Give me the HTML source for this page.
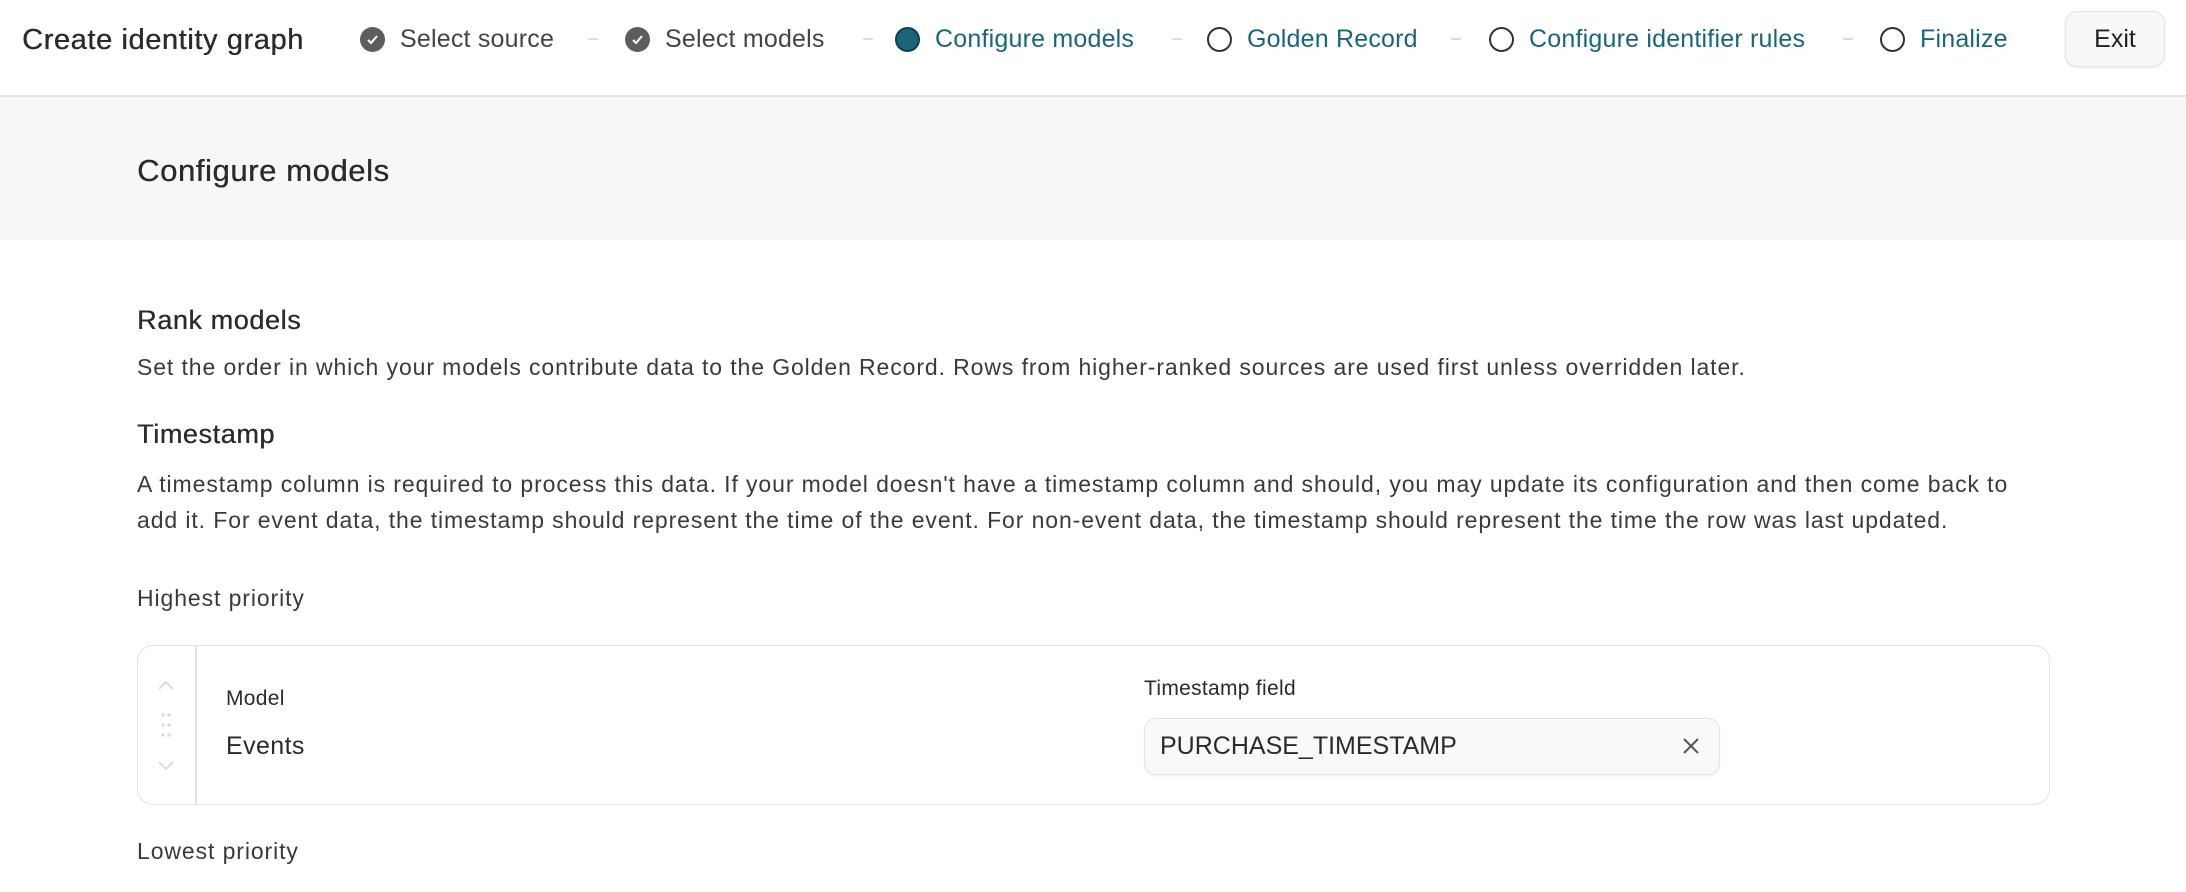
<!DOCTYPE html>
<html><head><meta charset="utf-8"><style>
*{box-sizing:border-box;margin:0;padding:0}
body{width:2186px;height:892px;overflow:hidden;background:#fff;font-family:"Liberation Sans",sans-serif;color:#2b2b2b;position:relative}
.a{position:absolute;white-space:nowrap}
.hdr{position:absolute;left:0;top:0;width:2186px;height:97px;border-bottom:2px solid #e6e6e6;background:#fff}
.step{position:absolute;top:25px;height:28px;display:flex;align-items:center;font-size:25px;letter-spacing:0.2px}
.step .c{width:25px;height:25px;border-radius:50%;margin-right:15px;flex:none}
.done .c{background:#5f5c5c;position:relative}
.done{color:#444}
.todo{color:#1c6478}
.todo .c{border:2px solid #333;background:#fff}
.cur .c{background:#1c6478;border:2px solid #123f4c}
.dash{position:absolute;top:38px;width:10px;height:2px;background:#ddd}
.band{position:absolute;left:0;top:97px;width:2186px;height:143px;background:#f7f7f7}
.p{font-size:23px;letter-spacing:0.9px;color:#3a3a3a}
.h{text-shadow:0.4px 0 0 currentColor;letter-spacing:0.6px}
</style></head><body>
<div class="hdr"></div>
<div class="a h" style="left:22px;top:24px;font-size:29px;color:#2b2b2b">Create identity graph</div>

<div class="step done" style="left:360px"><span class="c"><svg width="25" height="25" viewBox="0 0 25 25"><path d="M8 13l3 3 6-7" fill="none" stroke="#fff" stroke-width="2"/></svg></span>Select source</div>
<div class="dash" style="left:588px"></div>
<div class="step done" style="left:625px"><span class="c"><svg width="25" height="25" viewBox="0 0 25 25"><path d="M8 13l3 3 6-7" fill="none" stroke="#fff" stroke-width="2"/></svg></span>Select models</div>
<div class="dash" style="left:863px"></div>
<div class="step todo cur" style="left:895px"><span class="c"></span>Configure models</div>
<div class="dash" style="left:1172px"></div>
<div class="step todo" style="left:1207px"><span class="c"></span>Golden Record</div>
<div class="dash" style="left:1451px"></div>
<div class="step todo" style="left:1489px"><span class="c"></span>Configure identifier rules</div>
<div class="dash" style="left:1843px"></div>
<div class="step todo" style="left:1880px"><span class="c"></span>Finalize</div>
<div class="a" style="left:2065px;top:11px;width:100px;height:56px;border:1px solid #e2e2e2;border-radius:12px;background:#f8f8f8;box-shadow:0 1px 2px rgba(0,0,0,.08);font-size:25px;text-align:center;line-height:54px;color:#222">Exit</div>

<div class="band"></div>
<div class="a h" style="left:137px;top:153px;font-size:31px">Configure models</div>

<div class="a h" style="left:137px;top:305px;font-size:27px">Rank models</div>
<div class="a p" style="left:137px;top:354px">Set the order in which your models contribute data to the Golden Record. Rows from higher-ranked sources are used first unless overridden later.</div>
<div class="a h" style="left:137px;top:419px;font-size:27px">Timestamp</div>
<div class="a p" style="left:137px;top:466px;line-height:36px">A timestamp column is required to process this data. If your model doesn't have a timestamp column and should, you may update its configuration and then come back to<br>add it. For event data, the timestamp should represent the time of the event. For non-event data, the timestamp should represent the time the row was last updated.</div>
<div class="a p" style="left:137px;top:585px">Highest priority</div>

<div class="a" style="left:137px;top:645px;width:1913px;height:160px;border:1.5px solid #e2e2e2;border-radius:16px"></div>
<div class="a" style="left:195px;top:646px;width:1.5px;height:158px;background:#e2e2e2"></div>
<svg class="a" style="left:154px;top:672px" width="24" height="110" viewBox="0 0 24 110">
<path d="M5 17l7-7 7 7" fill="none" stroke="#ddd" stroke-width="2"/>
<g fill="#ddd"><circle cx="9" cy="43" r="1.8"/><circle cx="15" cy="43" r="1.8"/><circle cx="9" cy="53" r="1.8"/><circle cx="15" cy="53" r="1.8"/><circle cx="9" cy="63" r="1.8"/><circle cx="15" cy="63" r="1.8"/></g>
<path d="M5 90l7 7 7-7" fill="none" stroke="#ddd" stroke-width="2"/>
</svg>
<div class="a" style="left:226px;top:687px;font-size:21px;letter-spacing:0.3px">Model</div>
<div class="a" style="left:226px;top:732px;font-size:25px;letter-spacing:0.4px">Events</div>
<div class="a" style="left:1144px;top:677px;font-size:21px;letter-spacing:0.3px">Timestamp field</div>
<div class="a" style="left:1144px;top:718px;width:576px;height:57px;border:1.5px solid #e2e2e2;border-radius:12px;background:#f9f9f9;box-shadow:0 1px 2px rgba(0,0,0,.06)"></div>
<div class="a" style="left:1160px;top:732px;font-size:25px">PURCHASE_TIMESTAMP</div>
<svg class="a" style="left:1681px;top:736px" width="20" height="20" viewBox="0 0 20 20"><path d="M3 3l14 14M17 3L3 17" stroke="#555" stroke-width="2"/></svg>

<div class="a p" style="left:137px;top:838px">Lowest priority</div>
</body></html>
